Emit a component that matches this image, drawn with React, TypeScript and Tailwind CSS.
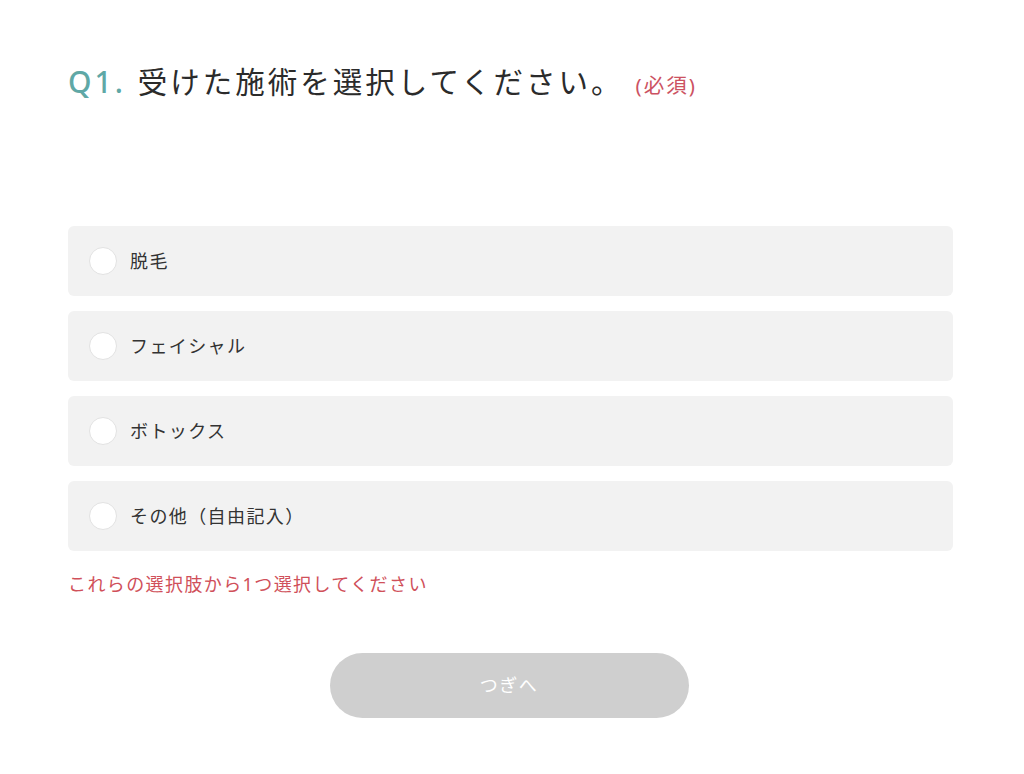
import { useState } from 'react';

const options = ['脱毛', 'フェイシャル', 'ボトックス', 'その他（自由記入）'];

export default function App() {
  const [selected, setSelected] = useState<string | null>(null);

  return (
    <div
      className="min-h-screen bg-white text-[#333333]"
      style={{ fontFamily: '"Noto Sans", "Noto Sans CJK JP", sans-serif' }}
    >
      <div className="px-[68px] pt-[62px]">
        {/* Question heading */}
        <div className="flex items-baseline">
          <span className="text-[30px] leading-[40px] font-medium text-[#5fa8a6] tracking-[3px]">Q1.</span>
          <h2 className="ml-[12px] text-[29.5px] leading-[40px] text-[#2b2b2b] tracking-[3px]">受けた施術を選択してください。</h2>
          <span className="ml-[12px] text-[20.5px] text-[#cc5262] tracking-[2px]">(必須)</span>
        </div>

        {/* Options */}
        <div className="mt-[124px] flex flex-col gap-[15px] w-[885px]">
          {options.map(opt => (
            <label
              key={opt}
              onClick={() => setSelected(opt)}
              className="h-[70px] bg-[#f2f2f2] rounded-[6px] flex items-center pl-[21px] cursor-pointer"
            >
              <span className="w-[28px] h-[28px] rounded-full bg-white border border-[#e2e2e2] flex items-center justify-center shrink-0">
                {selected === opt && <span className="w-[14px] h-[14px] rounded-full bg-[#5fa8a6]"></span>}
              </span>
              <span className="ml-[13px] text-[18px] text-[#333333] tracking-[1.4px]">{opt}</span>
            </label>
          ))}
        </div>

        {!selected && (
          <p className="mt-[20px] text-[18px] text-[#d0505a] tracking-[1.4px]">これらの選択肢から1つ選択してください</p>
        )}

        {/* Next button */}
        <div className="flex justify-center w-[885px] mt-[55px]">
          <button
            disabled={!selected}
            className="w-[359px] h-[65px] rounded-full bg-[#cfcfcf] text-white text-[18px] tracking-[1.5px] ml-[-3px]"
          >
            つぎへ
          </button>
        </div>
      </div>
    </div>
  );
}
